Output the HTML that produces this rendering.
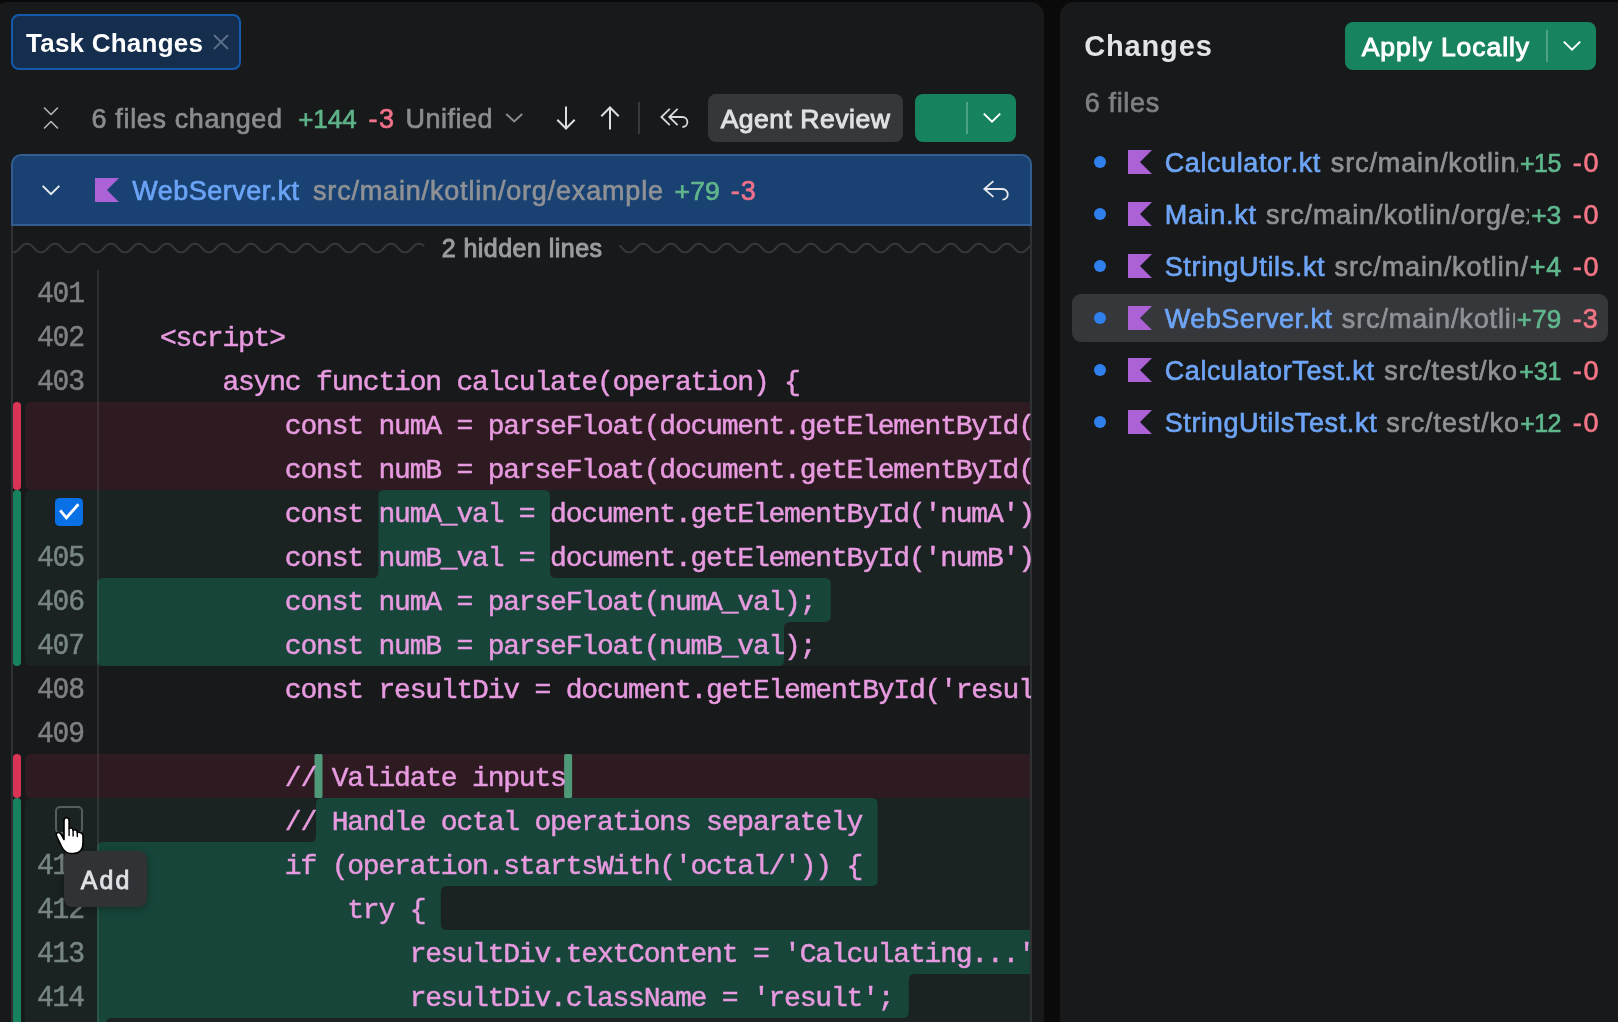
<!DOCTYPE html><html lang="en"><head><meta charset="utf-8"><title>Task Changes</title><style>
html,body{margin:0;padding:0;}
body{width:1618px;height:1022px;overflow:hidden;background:#0a0a0b;position:relative;font-family:"Liberation Sans",sans-serif;}
#root{position:absolute;left:0;top:0;width:1618px;height:1022px;overflow:hidden;will-change:transform;}
.abs,.t{position:absolute;}
.t{white-space:pre;display:block;}
.panel{position:absolute;background:#18191b;}
#left{left:-6px;top:2px;width:1050px;height:1030px;border-radius:14px 14px 0 0;}
#right{left:1060px;top:2px;width:570px;height:1030px;border-radius:14px 0 0 0;}
svg{position:absolute;overflow:visible;}
.code,.ln{position:absolute;font-family:"Liberation Mono",monospace;white-space:pre;font-size:28px;letter-spacing:-1.2px;line-height:44px;height:44px;}
.code{left:97.6px;color:#e79adf;-webkit-text-stroke:0.5px #e79adf;}
.ln{left:37px;-webkit-text-stroke:0.5px #7f8084;transform:scaleY(1.06);transform-origin:0 31px;color:#7f8084;}
ln.lna,.lna{color:#788683;-webkit-text-stroke-color:#788683;}
#codeclip{position:absolute;left:0;top:226px;width:1031px;height:800px;overflow:hidden;}
</style></head><body>
<div id="root"><div id="left" class="panel"></div><div id="right" class="panel"></div>
<div class="abs" style="left:11px;top:14px;width:226px;height:52px;border:2px solid #1459ab;border-radius:8px;background:#162e4e;"></div>
<span class="t " style="left:26.00px;top:26.00px;font-size:26.0px;line-height:34px;color:#ffffff;font-weight:700;letter-spacing:0.236px;">Task Changes</span>
<svg style="left:212px;top:33px" width="18" height="18" viewBox="0 0 18 18"><path d="M2 2 L16 16 M16 2 L2 16" stroke="#5d6f89" stroke-width="1.8" fill="none" stroke-linecap="butt"/></svg>
<svg style="left:42px;top:105px" width="18" height="26" viewBox="0 0 18 26"><path d="M2.5 3 L9 9.5 L15.5 3 M2.5 23 L9 16.5 L15.5 23" stroke="#b4b6ba" stroke-width="1.6" fill="none" stroke-linecap="round" stroke-linejoin="round"/></svg>
<span class="t " style="left:91.60px;top:102.00px;font-size:27.0px;line-height:35px;color:#8a8c90;letter-spacing:0.629px;-webkit-text-stroke:0.65px #8a8c90;">6 files changed</span>
<span class="t " style="left:298.20px;top:102.00px;font-size:26.0px;line-height:34px;color:#5fb48a;letter-spacing:-0.033px;-webkit-text-stroke:0.65px #5fb48a;">+144</span>
<span class="t " style="left:368.60px;top:102.00px;font-size:27.0px;line-height:35px;color:#f2728a;letter-spacing:1.500px;-webkit-text-stroke:0.65px #f2728a;">-3</span>
<span class="t " style="left:405.60px;top:102.00px;font-size:27.0px;line-height:35px;color:#8a8c90;letter-spacing:0.500px;-webkit-text-stroke:0.65px #8a8c90;">Unified</span>
<svg style="left:504px;top:111px" width="20" height="14" viewBox="0 0 20 14"><path d="M2.2 2.9 L10.2 10.4 L18.2 2.9" stroke="#8a8c90" stroke-width="2" fill="none" stroke-linecap="butt" stroke-linejoin="miter"/></svg>
<svg style="left:555px;top:104px" width="22" height="28" viewBox="0 0 22 28"><path d="M11 2.5 V24.5 M2.3 15.8 L11 24.5 L19.7 15.8" stroke="#dcdde1" stroke-width="2" fill="none" stroke-linecap="butt" stroke-linejoin="miter"/></svg>
<svg style="left:599px;top:104px" width="22" height="28" viewBox="0 0 22 28"><path d="M11 25.5 V3.5 M2.3 12.2 L11 3.5 L19.7 12.2" stroke="#dcdde1" stroke-width="2" fill="none" stroke-linecap="butt" stroke-linejoin="miter"/></svg>
<div class="abs" style="left:638px;top:102px;width:2px;height:32px;background:#38393c;"></div>
<svg style="left:660px;top:108px" width="30" height="22" viewBox="0 0 30 22"><path d="M9.8 0.8 L1.4 9 L9.8 17.2 M17.6 0.8 L9.2 9 L17.6 17.2 M10 9 H22.4 A5 5 0 0 1 22.4 19" stroke="#d9dade" stroke-width="1.8" fill="none" stroke-linecap="butt" stroke-linejoin="miter"/></svg>
<div class="abs" style="left:708px;top:94px;width:195px;height:48px;border-radius:8px;background:#36373a;"></div>
<span class="t " style="left:720.70px;top:102.00px;font-size:26.5px;line-height:34px;color:#dfe0e4;letter-spacing:0.509px;-webkit-text-stroke:1.0px #dfe0e4;">Agent Review</span>
<div class="abs" style="left:915px;top:94px;width:101px;height:48px;border-radius:8px;background:#17835e;"></div>
<div class="abs" style="left:966px;top:102px;width:2px;height:32px;background:#4da184;"></div>
<svg style="left:981px;top:110px" width="22" height="16" viewBox="0 0 22 16"><path d="M2.8 3.6 L11 11.6 L19.2 3.6" stroke="#ffffff" stroke-width="2" fill="none" stroke-linecap="butt" stroke-linejoin="miter"/></svg>
<div class="abs" style="left:11px;top:154px;width:1017px;height:68px;border:2px solid #335c8f;border-radius:10px 10px 0 0;background:#194273;"></div>
<svg style="left:40px;top:183px" width="22" height="14" viewBox="0 0 22 14"><path d="M2.7 2.9 L11 11.2 L19.3 2.9" stroke="#e9eaee" stroke-width="2" fill="none" stroke-linecap="butt" stroke-linejoin="miter"/></svg>
<svg style="left:95px;top:178px" width="24" height="24" viewBox="0 0 24 24"><path d="M0 0 H24 L12 12 L24 24 H0 Z" fill="#aa62d6"/></svg>
<span class="t " style="left:132.30px;top:174.00px;font-size:27.0px;line-height:35px;color:#6ba4f6;letter-spacing:0.473px;-webkit-text-stroke:0.65px #6ba4f6;">WebServer.kt</span>
<span class="t " style="left:313.00px;top:174.00px;font-size:27.0px;line-height:35px;color:#8f9195;letter-spacing:0.823px;-webkit-text-stroke:0.65px #8f9195;">src/main/kotlin/org/example</span>
<span class="t " style="left:674.60px;top:174.00px;font-size:26.5px;line-height:34px;color:#62b68c;letter-spacing:0.150px;-webkit-text-stroke:0.65px #62b68c;">+79</span>
<span class="t " style="left:730.70px;top:174.00px;font-size:27.0px;line-height:35px;color:#f2728a;letter-spacing:1.000px;-webkit-text-stroke:0.65px #f2728a;">-3</span>
<svg style="left:983px;top:179px" width="28" height="24" viewBox="0 0 28 24"><path d="M10.4 2.1 L1.3 10 L10.4 17.9 M2 10 H19.5 A5.3 5.3 0 0 1 19.5 20.6" stroke="#e9eaee" stroke-width="1.8" fill="none" stroke-linecap="butt" stroke-linejoin="miter"/></svg>
<div id="codeclip">
<svg style="left:0;top:0" width="1031" height="44"><path d="M13.0 26.30 L14.3 26.17 L15.4 25.82 L16.5 25.28 L17.4 24.60 L18.3 23.79 L19.2 22.92 L20.0 22.00 L20.8 21.08 L21.7 20.21 L22.6 19.40 L23.5 18.72 L24.6 18.18 L25.7 17.83 L27.0 17.70 L28.3 17.83 L29.4 18.18 L30.5 18.72 L31.4 19.40 L32.3 20.21 L33.2 21.08 L34.0 22.00 L34.8 22.92 L35.7 23.79 L36.6 24.60 L37.5 25.28 L38.6 25.82 L39.7 26.17 L41.0 26.30 L42.3 26.17 L43.4 25.82 L44.5 25.28 L45.4 24.60 L46.3 23.79 L47.2 22.92 L48.0 22.00 L48.8 21.08 L49.7 20.21 L50.6 19.40 L51.5 18.72 L52.6 18.18 L53.7 17.83 L55.0 17.70 L56.3 17.83 L57.4 18.18 L58.5 18.72 L59.4 19.40 L60.3 20.21 L61.2 21.08 L62.0 22.00 L62.8 22.92 L63.7 23.79 L64.6 24.60 L65.5 25.28 L66.6 25.82 L67.7 26.17 L69.0 26.30 L70.3 26.17 L71.4 25.82 L72.5 25.28 L73.4 24.60 L74.3 23.79 L75.2 22.92 L76.0 22.00 L76.8 21.08 L77.7 20.21 L78.6 19.40 L79.5 18.72 L80.6 18.18 L81.7 17.83 L83.0 17.70 L84.3 17.83 L85.4 18.18 L86.5 18.72 L87.4 19.40 L88.3 20.21 L89.2 21.08 L90.0 22.00 L90.8 22.92 L91.7 23.79 L92.6 24.60 L93.5 25.28 L94.6 25.82 L95.7 26.17 L97.0 26.30 L98.3 26.17 L99.4 25.82 L100.5 25.28 L101.4 24.60 L102.3 23.79 L103.2 22.92 L104.0 22.00 L104.8 21.08 L105.7 20.21 L106.6 19.40 L107.5 18.72 L108.6 18.18 L109.7 17.83 L111.0 17.70 L112.3 17.83 L113.4 18.18 L114.5 18.72 L115.4 19.40 L116.3 20.21 L117.2 21.08 L118.0 22.00 L118.8 22.92 L119.7 23.79 L120.6 24.60 L121.5 25.28 L122.6 25.82 L123.7 26.17 L125.0 26.30 L126.3 26.17 L127.4 25.82 L128.5 25.28 L129.4 24.60 L130.3 23.79 L131.2 22.92 L132.0 22.00 L132.8 21.08 L133.7 20.21 L134.6 19.40 L135.5 18.72 L136.6 18.18 L137.7 17.83 L139.0 17.70 L140.3 17.83 L141.4 18.18 L142.5 18.72 L143.4 19.40 L144.3 20.21 L145.2 21.08 L146.0 22.00 L146.8 22.92 L147.7 23.79 L148.6 24.60 L149.5 25.28 L150.6 25.82 L151.7 26.17 L153.0 26.30 L154.3 26.17 L155.4 25.82 L156.5 25.28 L157.4 24.60 L158.3 23.79 L159.2 22.92 L160.0 22.00 L160.8 21.08 L161.7 20.21 L162.6 19.40 L163.5 18.72 L164.6 18.18 L165.7 17.83 L167.0 17.70 L168.3 17.83 L169.4 18.18 L170.5 18.72 L171.4 19.40 L172.3 20.21 L173.2 21.08 L174.0 22.00 L174.8 22.92 L175.7 23.79 L176.6 24.60 L177.5 25.28 L178.6 25.82 L179.7 26.17 L181.0 26.30 L182.3 26.17 L183.4 25.82 L184.5 25.28 L185.4 24.60 L186.3 23.79 L187.2 22.92 L188.0 22.00 L188.8 21.08 L189.7 20.21 L190.6 19.40 L191.5 18.72 L192.6 18.18 L193.7 17.83 L195.0 17.70 L196.3 17.83 L197.4 18.18 L198.5 18.72 L199.4 19.40 L200.3 20.21 L201.2 21.08 L202.0 22.00 L202.8 22.92 L203.7 23.79 L204.6 24.60 L205.5 25.28 L206.6 25.82 L207.7 26.17 L209.0 26.30 L210.3 26.17 L211.4 25.82 L212.5 25.28 L213.4 24.60 L214.3 23.79 L215.2 22.92 L216.0 22.00 L216.8 21.08 L217.7 20.21 L218.6 19.40 L219.5 18.72 L220.6 18.18 L221.7 17.83 L223.0 17.70 L224.3 17.83 L225.4 18.18 L226.5 18.72 L227.4 19.40 L228.3 20.21 L229.2 21.08 L230.0 22.00 L230.8 22.92 L231.7 23.79 L232.6 24.60 L233.5 25.28 L234.6 25.82 L235.7 26.17 L237.0 26.30 L238.3 26.17 L239.4 25.82 L240.5 25.28 L241.4 24.60 L242.3 23.79 L243.2 22.92 L244.0 22.00 L244.8 21.08 L245.7 20.21 L246.6 19.40 L247.5 18.72 L248.6 18.18 L249.7 17.83 L251.0 17.70 L252.3 17.83 L253.4 18.18 L254.5 18.72 L255.4 19.40 L256.3 20.21 L257.2 21.08 L258.0 22.00 L258.8 22.92 L259.7 23.79 L260.6 24.60 L261.5 25.28 L262.6 25.82 L263.7 26.17 L265.0 26.30 L266.3 26.17 L267.4 25.82 L268.5 25.28 L269.4 24.60 L270.3 23.79 L271.2 22.92 L272.0 22.00 L272.8 21.08 L273.7 20.21 L274.6 19.40 L275.5 18.72 L276.6 18.18 L277.7 17.83 L279.0 17.70 L280.3 17.83 L281.4 18.18 L282.5 18.72 L283.4 19.40 L284.3 20.21 L285.2 21.08 L286.0 22.00 L286.8 22.92 L287.7 23.79 L288.6 24.60 L289.5 25.28 L290.6 25.82 L291.7 26.17 L293.0 26.30 L294.3 26.17 L295.4 25.82 L296.5 25.28 L297.4 24.60 L298.3 23.79 L299.2 22.92 L300.0 22.00 L300.8 21.08 L301.7 20.21 L302.6 19.40 L303.5 18.72 L304.6 18.18 L305.7 17.83 L307.0 17.70 L308.3 17.83 L309.4 18.18 L310.5 18.72 L311.4 19.40 L312.3 20.21 L313.2 21.08 L314.0 22.00 L314.8 22.92 L315.7 23.79 L316.6 24.60 L317.5 25.28 L318.6 25.82 L319.7 26.17 L321.0 26.30 L322.3 26.17 L323.4 25.82 L324.5 25.28 L325.4 24.60 L326.3 23.79 L327.2 22.92 L328.0 22.00 L328.8 21.08 L329.7 20.21 L330.6 19.40 L331.5 18.72 L332.6 18.18 L333.7 17.83 L335.0 17.70 L336.3 17.83 L337.4 18.18 L338.5 18.72 L339.4 19.40 L340.3 20.21 L341.2 21.08 L342.0 22.00 L342.8 22.92 L343.7 23.79 L344.6 24.60 L345.5 25.28 L346.6 25.82 L347.7 26.17 L349.0 26.30 L350.3 26.17 L351.4 25.82 L352.5 25.28 L353.4 24.60 L354.3 23.79 L355.2 22.92 L356.0 22.00 L356.8 21.08 L357.7 20.21 L358.6 19.40 L359.5 18.72 L360.6 18.18 L361.7 17.83 L363.0 17.70 L364.3 17.83 L365.4 18.18 L366.5 18.72 L367.4 19.40 L368.3 20.21 L369.2 21.08 L370.0 22.00 L370.8 22.92 L371.7 23.79 L372.6 24.60 L373.5 25.28 L374.6 25.82 L375.7 26.17 L377.0 26.30 L378.3 26.17 L379.4 25.82 L380.5 25.28 L381.4 24.60 L382.3 23.79 L383.2 22.92 L384.0 22.00 L384.8 21.08 L385.7 20.21 L386.6 19.40 L387.5 18.72 L388.6 18.18 L389.7 17.83 L391.0 17.70 L392.3 17.83 L393.4 18.18 L394.5 18.72 L395.4 19.40 L396.3 20.21 L397.2 21.08 L398.0 22.00 L398.8 22.92 L399.7 23.79 L400.6 24.60 L401.5 25.28 L402.6 25.82 L403.7 26.17 L405.0 26.30 L406.3 26.17 L407.4 25.82 L408.5 25.28 L409.4 24.60 L410.3 23.79 L411.2 22.92 L412.0 22.00 L412.8 21.08 L413.7 20.21 L414.6 19.40 L415.5 18.72 L416.6 18.18 L417.7 17.83 L419.0 17.70 L420.3 17.83 L421.4 18.18 L422.5 18.72 L423.4 19.40 L424.3 20.21" stroke="#3a3b3f" stroke-width="1.8" fill="none"/><path d="M619.4 19.40 L620.3 20.21 L621.2 21.08 L622.0 22.00 L622.8 22.92 L623.7 23.79 L624.6 24.60 L625.5 25.28 L626.6 25.82 L627.7 26.17 L629.0 26.30 L630.3 26.17 L631.4 25.82 L632.5 25.28 L633.4 24.60 L634.3 23.79 L635.2 22.92 L636.0 22.00 L636.8 21.08 L637.7 20.21 L638.6 19.40 L639.5 18.72 L640.6 18.18 L641.7 17.83 L643.0 17.70 L644.3 17.83 L645.4 18.18 L646.5 18.72 L647.4 19.40 L648.3 20.21 L649.2 21.08 L650.0 22.00 L650.8 22.92 L651.7 23.79 L652.6 24.60 L653.5 25.28 L654.6 25.82 L655.7 26.17 L657.0 26.30 L658.3 26.17 L659.4 25.82 L660.5 25.28 L661.4 24.60 L662.3 23.79 L663.2 22.92 L664.0 22.00 L664.8 21.08 L665.7 20.21 L666.6 19.40 L667.5 18.72 L668.6 18.18 L669.7 17.83 L671.0 17.70 L672.3 17.83 L673.4 18.18 L674.5 18.72 L675.4 19.40 L676.3 20.21 L677.2 21.08 L678.0 22.00 L678.8 22.92 L679.7 23.79 L680.6 24.60 L681.5 25.28 L682.6 25.82 L683.7 26.17 L685.0 26.30 L686.3 26.17 L687.4 25.82 L688.5 25.28 L689.4 24.60 L690.3 23.79 L691.2 22.92 L692.0 22.00 L692.8 21.08 L693.7 20.21 L694.6 19.40 L695.5 18.72 L696.6 18.18 L697.7 17.83 L699.0 17.70 L700.3 17.83 L701.4 18.18 L702.5 18.72 L703.4 19.40 L704.3 20.21 L705.2 21.08 L706.0 22.00 L706.8 22.92 L707.7 23.79 L708.6 24.60 L709.5 25.28 L710.6 25.82 L711.7 26.17 L713.0 26.30 L714.3 26.17 L715.4 25.82 L716.5 25.28 L717.4 24.60 L718.3 23.79 L719.2 22.92 L720.0 22.00 L720.8 21.08 L721.7 20.21 L722.6 19.40 L723.5 18.72 L724.6 18.18 L725.7 17.83 L727.0 17.70 L728.3 17.83 L729.4 18.18 L730.5 18.72 L731.4 19.40 L732.3 20.21 L733.2 21.08 L734.0 22.00 L734.8 22.92 L735.7 23.79 L736.6 24.60 L737.5 25.28 L738.6 25.82 L739.7 26.17 L741.0 26.30 L742.3 26.17 L743.4 25.82 L744.5 25.28 L745.4 24.60 L746.3 23.79 L747.2 22.92 L748.0 22.00 L748.8 21.08 L749.7 20.21 L750.6 19.40 L751.5 18.72 L752.6 18.18 L753.7 17.83 L755.0 17.70 L756.3 17.83 L757.4 18.18 L758.5 18.72 L759.4 19.40 L760.3 20.21 L761.2 21.08 L762.0 22.00 L762.8 22.92 L763.7 23.79 L764.6 24.60 L765.5 25.28 L766.6 25.82 L767.7 26.17 L769.0 26.30 L770.3 26.17 L771.4 25.82 L772.5 25.28 L773.4 24.60 L774.3 23.79 L775.2 22.92 L776.0 22.00 L776.8 21.08 L777.7 20.21 L778.6 19.40 L779.5 18.72 L780.6 18.18 L781.7 17.83 L783.0 17.70 L784.3 17.83 L785.4 18.18 L786.5 18.72 L787.4 19.40 L788.3 20.21 L789.2 21.08 L790.0 22.00 L790.8 22.92 L791.7 23.79 L792.6 24.60 L793.5 25.28 L794.6 25.82 L795.7 26.17 L797.0 26.30 L798.3 26.17 L799.4 25.82 L800.5 25.28 L801.4 24.60 L802.3 23.79 L803.2 22.92 L804.0 22.00 L804.8 21.08 L805.7 20.21 L806.6 19.40 L807.5 18.72 L808.6 18.18 L809.7 17.83 L811.0 17.70 L812.3 17.83 L813.4 18.18 L814.5 18.72 L815.4 19.40 L816.3 20.21 L817.2 21.08 L818.0 22.00 L818.8 22.92 L819.7 23.79 L820.6 24.60 L821.5 25.28 L822.6 25.82 L823.7 26.17 L825.0 26.30 L826.3 26.17 L827.4 25.82 L828.5 25.28 L829.4 24.60 L830.3 23.79 L831.2 22.92 L832.0 22.00 L832.8 21.08 L833.7 20.21 L834.6 19.40 L835.5 18.72 L836.6 18.18 L837.7 17.83 L839.0 17.70 L840.3 17.83 L841.4 18.18 L842.5 18.72 L843.4 19.40 L844.3 20.21 L845.2 21.08 L846.0 22.00 L846.8 22.92 L847.7 23.79 L848.6 24.60 L849.5 25.28 L850.6 25.82 L851.7 26.17 L853.0 26.30 L854.3 26.17 L855.4 25.82 L856.5 25.28 L857.4 24.60 L858.3 23.79 L859.2 22.92 L860.0 22.00 L860.8 21.08 L861.7 20.21 L862.6 19.40 L863.5 18.72 L864.6 18.18 L865.7 17.83 L867.0 17.70 L868.3 17.83 L869.4 18.18 L870.5 18.72 L871.4 19.40 L872.3 20.21 L873.2 21.08 L874.0 22.00 L874.8 22.92 L875.7 23.79 L876.6 24.60 L877.5 25.28 L878.6 25.82 L879.7 26.17 L881.0 26.30 L882.3 26.17 L883.4 25.82 L884.5 25.28 L885.4 24.60 L886.3 23.79 L887.2 22.92 L888.0 22.00 L888.8 21.08 L889.7 20.21 L890.6 19.40 L891.5 18.72 L892.6 18.18 L893.7 17.83 L895.0 17.70 L896.3 17.83 L897.4 18.18 L898.5 18.72 L899.4 19.40 L900.3 20.21 L901.2 21.08 L902.0 22.00 L902.8 22.92 L903.7 23.79 L904.6 24.60 L905.5 25.28 L906.6 25.82 L907.7 26.17 L909.0 26.30 L910.3 26.17 L911.4 25.82 L912.5 25.28 L913.4 24.60 L914.3 23.79 L915.2 22.92 L916.0 22.00 L916.8 21.08 L917.7 20.21 L918.6 19.40 L919.5 18.72 L920.6 18.18 L921.7 17.83 L923.0 17.70 L924.3 17.83 L925.4 18.18 L926.5 18.72 L927.4 19.40 L928.3 20.21 L929.2 21.08 L930.0 22.00 L930.8 22.92 L931.7 23.79 L932.6 24.60 L933.5 25.28 L934.6 25.82 L935.7 26.17 L937.0 26.30 L938.3 26.17 L939.4 25.82 L940.5 25.28 L941.4 24.60 L942.3 23.79 L943.2 22.92 L944.0 22.00 L944.8 21.08 L945.7 20.21 L946.6 19.40 L947.5 18.72 L948.6 18.18 L949.7 17.83 L951.0 17.70 L952.3 17.83 L953.4 18.18 L954.5 18.72 L955.4 19.40 L956.3 20.21 L957.2 21.08 L958.0 22.00 L958.8 22.92 L959.7 23.79 L960.6 24.60 L961.5 25.28 L962.6 25.82 L963.7 26.17 L965.0 26.30 L966.3 26.17 L967.4 25.82 L968.5 25.28 L969.4 24.60 L970.3 23.79 L971.2 22.92 L972.0 22.00 L972.8 21.08 L973.7 20.21 L974.6 19.40 L975.5 18.72 L976.6 18.18 L977.7 17.83 L979.0 17.70 L980.3 17.83 L981.4 18.18 L982.5 18.72 L983.4 19.40 L984.3 20.21 L985.2 21.08 L986.0 22.00 L986.8 22.92 L987.7 23.79 L988.6 24.60 L989.5 25.28 L990.6 25.82 L991.7 26.17 L993.0 26.30 L994.3 26.17 L995.4 25.82 L996.5 25.28 L997.4 24.60 L998.3 23.79 L999.2 22.92 L1000.0 22.00 L1000.8 21.08 L1001.7 20.21 L1002.6 19.40 L1003.5 18.72 L1004.6 18.18 L1005.7 17.83 L1007.0 17.70 L1008.3 17.83 L1009.4 18.18 L1010.5 18.72 L1011.4 19.40 L1012.3 20.21 L1013.2 21.08 L1014.0 22.00 L1014.8 22.92 L1015.7 23.79 L1016.6 24.60 L1017.5 25.28 L1018.6 25.82 L1019.7 26.17 L1021.0 26.30 L1022.3 26.17 L1023.4 25.82 L1024.5 25.28 L1025.4 24.60 L1026.3 23.79 L1027.2 22.92 L1028.0 22.00 L1028.8 21.08 L1029.7 20.21 L1030.6 19.40" stroke="#3a3b3f" stroke-width="1.8" fill="none"/></svg>
</div>
<span class="t " style="left:441.70px;top:232.00px;font-size:25.0px;line-height:32px;color:#9a9ca0;letter-spacing:0.469px;-webkit-text-stroke:1.0px #9a9ca0;">2 hidden lines</span>
<svg style="left:0;top:0;overflow:hidden" width="1031" height="1022" viewBox="0 0 1031 1022"><path d="M31 402 H1035 V490 H31 A6 6 0 0 1 25 484 V408 A6 6 0 0 1 31 402 Z" fill="#2d1b21"/><path d="M31 490 H1035 V666 H31 A6 6 0 0 1 25 660 V496 A6 6 0 0 1 31 490 Z" fill="#1a2322"/><path d="M31 754 H1035 V798 H31 A6 6 0 0 1 25 792 V760 A6 6 0 0 1 31 754 Z" fill="#2d1b21"/><path d="M31 798 H1035 V1098 H25 V804 A6 6 0 0 1 31 798 Z" fill="#1a2322"/><path d="M378.4 496.0 Q378.4 490.0 384.4 490.0 L544.0 490.0 Q550.0 490.0 550.0 496.0 L550.0 572.0 Q550.0 578.0 556.0 578.0 L824.8 578.0 Q830.8 578.0 830.8 584.0 L830.8 616.0 Q830.8 622.0 824.8 622.0 L790.0 622.0 Q784.0 622.0 784.0 628.0 L784.0 660.0 Q784.0 666.0 778.0 666.0 L103.0 666.0 Q97.0 666.0 97.0 660.0 L97.0 584.0 Q97.0 578.0 103.0 578.0 L372.4 578.0 Q378.4 578.0 378.4 572.0 Z" fill="#17453a"/><path d="M316.0 804.0 Q316.0 798.0 322.0 798.0 L871.6 798.0 Q877.6 798.0 877.6 804.0 L877.6 880.0 Q877.6 886.0 871.6 886.0 L446.8 886.0 Q440.8 886.0 440.8 892.0 L440.8 924.0 Q440.8 930.0 446.8 930.0 L1054.0 930.0 Q1060.0 930.0 1060.0 936.0 L1060.0 968.0 Q1060.0 974.0 1054.0 974.0 L914.8 974.0 Q908.8 974.0 908.8 980.0 L908.8 1012.0 Q908.8 1018.0 902.8 1018.0 L112.0 1018.0 Q106.0 1018.0 106.0 1024.0 L106.0 1055.5 Q106.0 1060.0 101.5 1060.0 L101.5 1060.0 Q97.0 1060.0 97.0 1055.5 L97.0 848.0 Q97.0 842.0 103.0 842.0 L310.0 842.0 Q316.0 842.0 316.0 836.0 Z" fill="#17453a"/><rect x="314.5" y="754" width="8" height="44" rx="1.5" fill="#4f9878"/><rect x="564.1" y="754" width="8" height="44" rx="1.5" fill="#4f9878"/></svg>
<div class="abs" style="left:13px;top:402px;width:8px;height:88px;border-radius:4px;background:#d93456;"></div>
<div class="abs" style="left:13px;top:490px;width:8px;height:176px;border-radius:4px;background:#17835e;"></div>
<div class="abs" style="left:13px;top:754px;width:8px;height:44px;border-radius:4px;background:#d93456;"></div>
<div class="abs" style="left:13px;top:798px;width:8px;height:300px;border-radius:4px;background:#17835e;"></div>
<div class="abs" style="left:11px;top:226px;width:2px;height:800px;background:#303134;"></div>
<div class="abs" style="left:1030px;top:226px;width:2px;height:800px;background:#303134;"></div>
<div class="abs" style="left:97px;top:270px;width:2px;height:760px;background:rgba(255,255,255,0.09);"></div>
<div class="abs" style="left:0;top:0;width:1031px;height:1022px;overflow:hidden;">
<span class="ln" style="top:273px">401</span>
<span class="ln" style="top:317px">402</span>
<span class="code" style="top:317px">    &lt;script&gt;</span>
<span class="ln" style="top:361px">403</span>
<span class="code" style="top:361px">        async function calculate(operation) {</span>
<span class="code" style="top:405px">            const numA = parseFloat(document.getElementById(&#x27;numA&#x27;).value);</span>
<span class="code" style="top:449px">            const numB = parseFloat(document.getElementById(&#x27;numB&#x27;).value);</span>
<span class="code" style="top:493px">            const numA_val = document.getElementById(&#x27;numA&#x27;).value;</span>
<span class="ln lna" style="top:537px">405</span>
<span class="code" style="top:537px">            const numB_val = document.getElementById(&#x27;numB&#x27;).value;</span>
<span class="ln lna" style="top:581px">406</span>
<span class="code" style="top:581px">            const numA = parseFloat(numA_val);</span>
<span class="ln lna" style="top:625px">407</span>
<span class="code" style="top:625px">            const numB = parseFloat(numB_val);</span>
<span class="ln" style="top:669px">408</span>
<span class="code" style="top:669px">            const resultDiv = document.getElementById(&#x27;result&#x27;);</span>
<span class="ln" style="top:713px">409</span>
<span class="code" style="top:757px">            // Validate inputs</span>
<span class="code" style="top:801px">            // Handle octal operations separately</span>
<span class="ln lna" style="top:845px">411</span>
<span class="code" style="top:845px">            if (operation.startsWith(&#x27;octal/&#x27;)) {</span>
<span class="ln lna" style="top:889px">412</span>
<span class="code" style="top:889px">                try {</span>
<span class="ln lna" style="top:933px">413</span>
<span class="code" style="top:933px">                    resultDiv.textContent = &#x27;Calculating...&#x27;;</span>
<span class="ln lna" style="top:977px">414</span>
<span class="code" style="top:977px">                    resultDiv.className = &#x27;result&#x27;;</span>
</div>
<div class="abs" style="left:55px;top:498px;width:28px;height:28px;border-radius:4.5px;background:#0a70e6;"></div>
<svg style="left:55px;top:498px" width="28" height="28" viewBox="0 0 28 28"><path d="M5.2 12.4 L11.4 19.8 L23.4 6.3" stroke="#ffffff" stroke-width="2.8" fill="none" stroke-linecap="butt" stroke-linejoin="miter"/></svg>
<div class="abs" style="left:55px;top:806px;width:24px;height:24px;border-radius:5px;border:2px solid #535e5d;"></div>
<div class="abs" style="left:64px;top:851px;width:83px;height:56px;border-radius:8px;background:#313236;box-shadow:0 2px 8px rgba(0,0,0,0.3);"></div>
<span class="t " style="left:80.70px;top:864.00px;font-size:25.0px;line-height:32px;color:#e1e2e6;letter-spacing:2.150px;-webkit-text-stroke:0.8px #e1e2e6;">Add</span>
<svg style="left:0;top:0" width="120" height="900" viewBox="0 0 120 900"><path d="M66.6 817.6 C68.4 817.6 69.1 818.9 69.1 820.4 L69.1 828.6 C69.8 827.6 72.6 827.6 73.0 829.6 L73.1 830.4 C73.9 829.4 76.8 829.6 77.2 831.6 L77.3 832.6 C78.3 831.8 82.4 832.2 83.0 835.6 L83.0 843 C83.0 849.5 79.5 853.5 73.5 853.5 L71 853.5 C66.5 853.5 63.8 851 61.8 847 L56.8 836.5 C55.6 834.2 56.4 832.9 57.8 832.6 C59.3 832.3 60.6 833.2 61.6 835 L64.0 839.5 L64.0 820.4 C64.0 818.9 64.8 817.6 66.6 817.6 Z" fill="#ffffff" stroke="#000000" stroke-width="1.6" stroke-linejoin="round"/><path d="M69.1 828.6 V835.5 M73.1 830.4 V836 M77.3 832.6 V836.5" stroke="#000000" stroke-width="1.4" fill="none" stroke-linecap="round"/></svg>
<span class="t " style="left:1084.20px;top:27.00px;font-size:29.0px;line-height:38px;color:#e3e4e8;font-weight:700;letter-spacing:0.850px;">Changes</span>
<div class="abs" style="left:1345px;top:22px;width:251px;height:48px;border-radius:8px;background:#18845f;"></div>
<span class="t " style="left:1361.70px;top:30.00px;font-size:26.5px;line-height:34px;color:#ffffff;letter-spacing:0.933px;-webkit-text-stroke:1.0px #ffffff;">Apply Locally</span>
<div class="abs" style="left:1546px;top:30px;width:2px;height:32px;background:#4fa184;"></div>
<svg style="left:1561px;top:38px" width="22" height="16" viewBox="0 0 22 16"><path d="M2.8 3.6 L11 11.6 L19.2 3.6" stroke="#ffffff" stroke-width="2" fill="none" stroke-linecap="butt" stroke-linejoin="miter"/></svg>
<span class="t " style="left:1084.70px;top:86.00px;font-size:27.0px;line-height:35px;color:#7e8085;letter-spacing:0.667px;-webkit-text-stroke:0.65px #7e8085;">6 files</span>
<div class="abs" style="left:1072px;top:294px;width:536px;height:48px;border-radius:9px;background:#36373a;"></div>
<div class="abs" style="left:1094px;top:156px;width:12px;height:12px;border-radius:6px;background:#2f80ec;"></div>
<svg style="left:1128px;top:150px" width="24" height="24" viewBox="0 0 24 24"><path d="M0 0 H24 L12 12 L24 24 H0 Z" fill="#aa62d6"/></svg>
<span class="t " style="left:1164.70px;top:146.00px;font-size:27.0px;line-height:35px;color:#6ea5f6;letter-spacing:0.592px;-webkit-text-stroke:0.65px #6ea5f6;">Calculator.kt</span>
<div class="abs" style="left:1328.8px;top:140px;width:189.6px;height:44px;overflow:hidden;">
<span class="t" style="left:2.00px;top:6px;font-size:27px;line-height:35px;color:#8f9195;letter-spacing:0.887px;-webkit-text-stroke:0.65px #8f9195;">src/main/kotlin/org/example</span>
</div>
<span class="t " style="left:1520.10px;top:147.00px;font-size:25.0px;line-height:32px;color:#5fb88d;letter-spacing:-0.600px;-webkit-text-stroke:0.65px #5fb88d;">+15</span>
<span class="t " style="left:1572.70px;top:146.00px;font-size:27.0px;line-height:35px;color:#f27585;letter-spacing:1.800px;-webkit-text-stroke:0.65px #f27585;">-0</span>
<div class="abs" style="left:1094px;top:208px;width:12px;height:12px;border-radius:6px;background:#2f80ec;"></div>
<svg style="left:1128px;top:202px" width="24" height="24" viewBox="0 0 24 24"><path d="M0 0 H24 L12 12 L24 24 H0 Z" fill="#aa62d6"/></svg>
<span class="t " style="left:1164.70px;top:198.00px;font-size:27.0px;line-height:35px;color:#6ea5f6;letter-spacing:0.700px;-webkit-text-stroke:0.65px #6ea5f6;">Main.kt</span>
<div class="abs" style="left:1263.9px;top:192px;width:265.1px;height:44px;overflow:hidden;">
<span class="t" style="left:2.00px;top:6px;font-size:27px;line-height:35px;color:#8f9195;letter-spacing:0.887px;-webkit-text-stroke:0.65px #8f9195;">src/main/kotlin/org/example</span>
</div>
<span class="t " style="left:1531.20px;top:198.00px;font-size:26.5px;line-height:34px;color:#5fb88d;letter-spacing:-0.100px;-webkit-text-stroke:0.65px #5fb88d;">+3</span>
<span class="t " style="left:1572.70px;top:198.00px;font-size:27.0px;line-height:35px;color:#f27585;letter-spacing:1.800px;-webkit-text-stroke:0.65px #f27585;">-0</span>
<div class="abs" style="left:1094px;top:260px;width:12px;height:12px;border-radius:6px;background:#2f80ec;"></div>
<svg style="left:1128px;top:254px" width="24" height="24" viewBox="0 0 24 24"><path d="M0 0 H24 L12 12 L24 24 H0 Z" fill="#aa62d6"/></svg>
<span class="t " style="left:1164.70px;top:250.00px;font-size:27.0px;line-height:35px;color:#6ea5f6;letter-spacing:0.646px;-webkit-text-stroke:0.65px #6ea5f6;">StringUtils.kt</span>
<div class="abs" style="left:1332.6px;top:244px;width:196.4px;height:44px;overflow:hidden;">
<span class="t" style="left:2.00px;top:6px;font-size:27px;line-height:35px;color:#8f9195;letter-spacing:0.887px;-webkit-text-stroke:0.65px #8f9195;">src/main/kotlin/org/example</span>
</div>
<span class="t " style="left:1529.80px;top:250.00px;font-size:27.0px;line-height:35px;color:#5fb88d;letter-spacing:0.700px;-webkit-text-stroke:0.65px #5fb88d;">+4</span>
<span class="t " style="left:1572.70px;top:250.00px;font-size:27.0px;line-height:35px;color:#f27585;letter-spacing:1.800px;-webkit-text-stroke:0.65px #f27585;">-0</span>
<div class="abs" style="left:1094px;top:312px;width:12px;height:12px;border-radius:6px;background:#2f80ec;"></div>
<svg style="left:1128px;top:306px" width="24" height="24" viewBox="0 0 24 24"><path d="M0 0 H24 L12 12 L24 24 H0 Z" fill="#aa62d6"/></svg>
<span class="t " style="left:1164.70px;top:302.00px;font-size:27.0px;line-height:35px;color:#6ea5f6;letter-spacing:0.527px;-webkit-text-stroke:0.65px #6ea5f6;">WebServer.kt</span>
<div class="abs" style="left:1339.8px;top:296px;width:174.8px;height:44px;overflow:hidden;">
<span class="t" style="left:2.00px;top:6px;font-size:27px;line-height:35px;color:#8f9195;letter-spacing:0.887px;-webkit-text-stroke:0.65px #8f9195;">src/main/kotlin/org/example</span>
</div>
<span class="t " style="left:1516.80px;top:302.00px;font-size:26.0px;line-height:34px;color:#5fb88d;letter-spacing:0.200px;-webkit-text-stroke:0.65px #5fb88d;">+79</span>
<span class="t " style="left:1572.70px;top:302.00px;font-size:27.0px;line-height:35px;color:#f27585;letter-spacing:1.000px;-webkit-text-stroke:0.65px #f27585;">-3</span>
<div class="abs" style="left:1094px;top:364px;width:12px;height:12px;border-radius:6px;background:#2f80ec;"></div>
<svg style="left:1128px;top:358px" width="24" height="24" viewBox="0 0 24 24"><path d="M0 0 H24 L12 12 L24 24 H0 Z" fill="#aa62d6"/></svg>
<span class="t " style="left:1164.70px;top:354.00px;font-size:27.0px;line-height:35px;color:#6ea5f6;letter-spacing:0.606px;-webkit-text-stroke:0.65px #6ea5f6;">CalculatorTest.kt</span>
<div class="abs" style="left:1382.2px;top:348px;width:135.8px;height:44px;overflow:hidden;">
<span class="t" style="left:2.00px;top:6px;font-size:27px;line-height:35px;color:#8f9195;letter-spacing:0.980px;-webkit-text-stroke:0.65px #8f9195;">src/test/kotlin/org/example</span>
</div>
<span class="t " style="left:1519.30px;top:355.00px;font-size:25.0px;line-height:32px;color:#5fb88d;letter-spacing:-0.200px;-webkit-text-stroke:0.65px #5fb88d;">+31</span>
<span class="t " style="left:1572.70px;top:354.00px;font-size:27.0px;line-height:35px;color:#f27585;letter-spacing:1.800px;-webkit-text-stroke:0.65px #f27585;">-0</span>
<div class="abs" style="left:1094px;top:416px;width:12px;height:12px;border-radius:6px;background:#2f80ec;"></div>
<svg style="left:1128px;top:410px" width="24" height="24" viewBox="0 0 24 24"><path d="M0 0 H24 L12 12 L24 24 H0 Z" fill="#aa62d6"/></svg>
<span class="t " style="left:1164.70px;top:406.00px;font-size:27.0px;line-height:35px;color:#6ea5f6;letter-spacing:0.641px;-webkit-text-stroke:0.65px #6ea5f6;">StringUtilsTest.kt</span>
<div class="abs" style="left:1384.2px;top:400px;width:133.8px;height:44px;overflow:hidden;">
<span class="t" style="left:2.00px;top:6px;font-size:27px;line-height:35px;color:#8f9195;letter-spacing:0.980px;-webkit-text-stroke:0.65px #8f9195;">src/test/kotlin/org/example</span>
</div>
<span class="t " style="left:1520.30px;top:407.00px;font-size:25.0px;line-height:32px;color:#5fb88d;letter-spacing:-0.700px;-webkit-text-stroke:0.65px #5fb88d;">+12</span>
<span class="t " style="left:1572.70px;top:406.00px;font-size:27.0px;line-height:35px;color:#f27585;letter-spacing:1.800px;-webkit-text-stroke:0.65px #f27585;">-0</span>
</div></body></html>
